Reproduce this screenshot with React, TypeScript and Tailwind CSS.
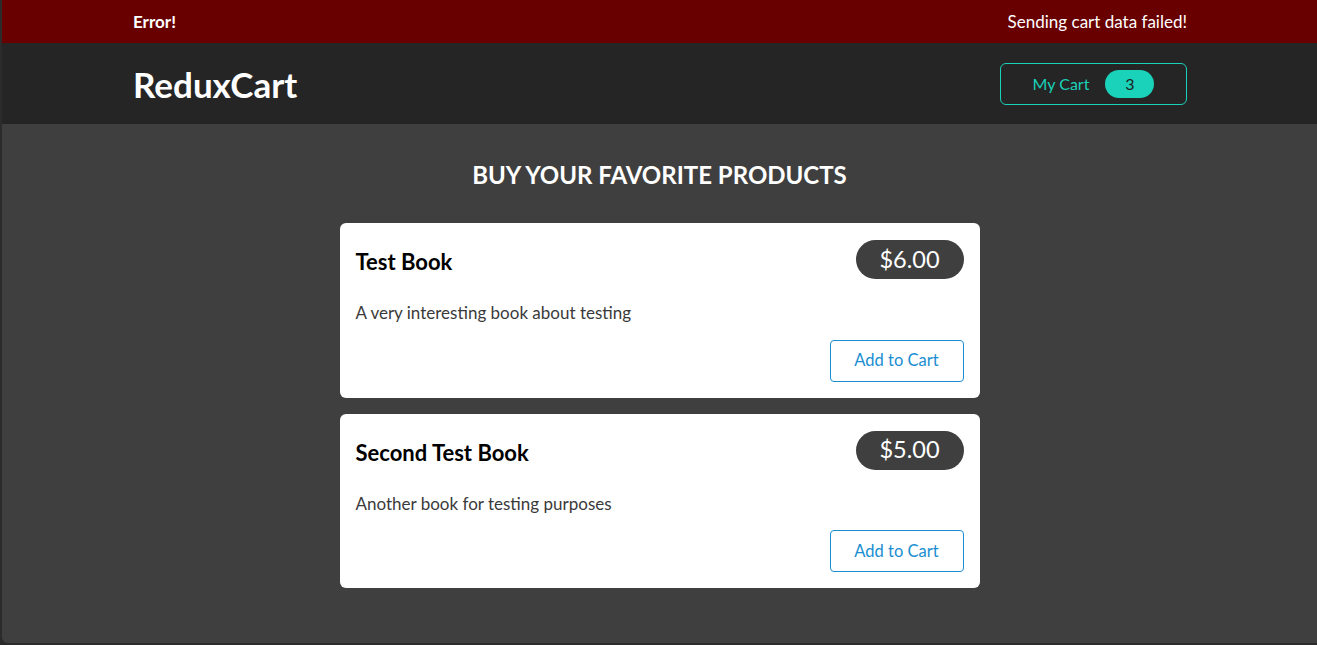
import React from "react";

const products = [
  { id: "p1", title: "Test Book", price: 6, description: "A very interesting book about testing" },
  { id: "p2", title: "Second Test Book", price: 5, description: "Another book for testing purposes" },
];

const ProductItem: React.FC<{ title: string; price: number; description: string }> = ({
  title,
  price,
  description,
}) => (
  <li className="bg-white rounded-md p-4 pt-[17px] list-none">
    <header className="flex items-center justify-between">
      <h3 className="text-[22px] font-bold text-black translate-y-[2px]">{title}</h3>
      <div className="bg-[#3f3f3f] text-white rounded-full h-[39px] w-[108px] flex items-center justify-center text-[23.5px]">
        ${price.toFixed(2)}
      </div>
    </header>
    <p className="text-[#3a3a3a] text-[17px] mt-[21px]">{description}</p>
    <div className="flex justify-end mt-[14px]">
      <button className="border border-[#1a8ed1] text-[#1a8ed1] rounded-[4px] h-[42px] w-[134px] text-[16.5px] bg-white">
        Add to Cart
      </button>
    </div>
  </li>
);

export default function App() {
  return (
    <div
      className="min-h-[645px] bg-[#2b2b2b] pl-[2px]"
      style={{ fontFamily: "Lato, 'Noto Sans', sans-serif" }}
    >
      <div className="h-[643px] bg-[#3f3f3f] rounded-bl-md flex flex-col">
        <section className="bg-[#690000] h-[43px] flex items-center justify-between pl-[131px] pr-[130px] text-white text-[17px]">
          <h2 className="font-bold">Error!</h2>
          <p>Sending cart data failed!</p>
        </section>
        <header className="bg-[#252525] h-[81px] flex items-center justify-between pl-[131px] pr-[130px]">
          <h1 className="text-white text-[35px] font-bold mt-[2px]">ReduxCart</h1>
          <button className="border border-[#1ad1b9] rounded-md h-[42px] w-[187px] flex items-center justify-center gap-4 text-[#1ad1b9] text-[16px]">
            <span>My Cart</span>
            <span className="bg-[#1ad1b9] text-[#1e1e1e] rounded-full w-[49px] h-[28px] flex items-center justify-center">
              3
            </span>
          </button>
        </header>
        <main className="flex flex-col items-center pt-[33px]">
          <h2 className="text-white text-[24px] font-bold uppercase">Buy your favorite products</h2>
          <ul className="w-[640px] flex flex-col gap-4 mt-[30px]">
            {products.map((p) => (
              <ProductItem key={p.id} title={p.title} price={p.price} description={p.description} />
            ))}
          </ul>
        </main>
      </div>
    </div>
  );
}
